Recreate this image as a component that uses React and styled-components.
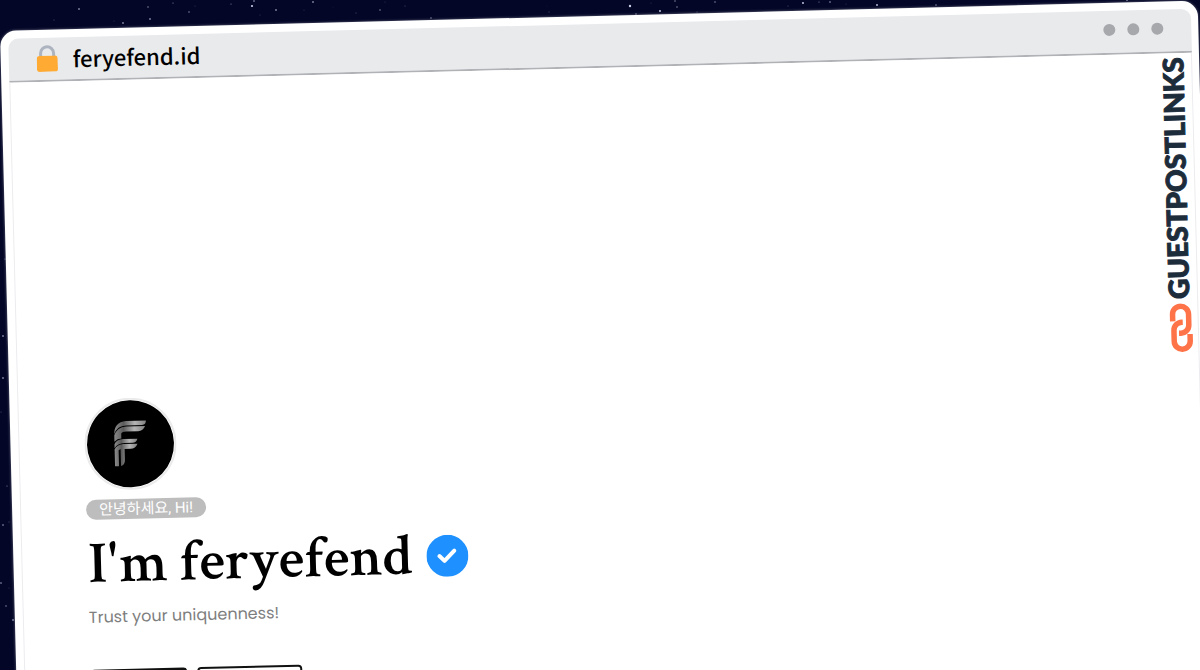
import React from 'react';
import styled, { createGlobalStyle } from 'styled-components';

const GlobalStyle = createGlobalStyle`
  * {
    box-sizing: border-box;
  }
  body {
    margin: 0;
    background: #030626;
  }
`;

const Sky = styled.div`
  position: relative;
  height: 100vh;
  overflow: hidden;
  padding: 31px 2px 0 0;
  background: #030626;
`;

const Stars = styled.svg`
  position: absolute;
  inset: 0;
  width: 100%;
  height: 100%;
`;

const Browser = styled.div`
  position: relative;
  min-height: 120vh;
  padding: 8px 7px 8px 8px;
  border-radius: 16px;
  background: #fff;
  box-shadow: 0 0 3px rgba(255, 255, 255, 0.4);
  transform: rotate(-1.45deg);
  transform-origin: 0 0;
`;

const AddressBar = styled.header`
  display: flex;
  align-items: center;
  height: 44px;
  padding: 0 28px 2px;
  border-bottom: 2px solid #b0b2b6;
  border-radius: 10px 10px 0 0;
  background: #e8eaec;
`;

const LockIcon = styled.svg`
  width: 21px;
  height: 27px;
  margin-right: 15px;
`;

const Address = styled.span`
  flex: 1;
  font-family: 'Noto Sans CJK JP', 'Noto Sans', sans-serif;
  font-size: 22px;
  font-weight: 500;
  line-height: 32px;
  color: #000;
`;

const Dots = styled.div`
  display: flex;
  gap: 12px;
  padding-bottom: 2px;
`;

const Dot = styled.span`
  width: 12px;
  height: 12px;
  border-radius: 50%;
  background: #a6a8ac;
`;

const Page = styled.div`
  display: flex;
  justify-content: space-between;
  align-items: flex-start;
  min-height: 110vh;
  border: solid #ececf0;
  border-width: 0 1px;
`;

const Profile = styled.main`
  display: flex;
  flex-direction: column;
  align-items: flex-start;
  padding: 318px 0 0 65px;
`;

const Avatar = styled.svg`
  width: 92px;
  height: 92px;
`;

const Greeting = styled.span`
  margin-top: 9px;
  padding: 0 13px;
  border-radius: 10px;
  background: #bdbdbd;
  color: #fff;
  font-family: Roboto, 'Noto Sans CJK KR', sans-serif;
  font-size: 15px;
  line-height: 20px;
`;

const Title = styled.div`
  display: flex;
  align-items: center;
  gap: 14px;
  margin: 14px 0 0 1px;
`;

const Name = styled.h1`
  margin: 0;
  font-family: 'Crimson Text', 'Liberation Serif', serif;
  font-size: 59px;
  font-weight: 600;
  line-height: 62px;
  color: #000;
`;

const Verified = styled.svg`
  width: 42px;
  height: 42px;
`;

const Tagline = styled.p`
  margin: 10px 0 0;
  font-family: Poppins, Inter, sans-serif;
  font-size: 16px;
  line-height: 24px;
  color: #7e7e7e;
`;

const Actions = styled.div`
  display: flex;
  gap: 10px;
  margin-top: 40px;
`;

const Button = styled.button`
  width: ${({ $filled }) => ($filled ? '97px' : '105px')};
  height: 44px;
  border: 2px solid #111;
  border-radius: 4px;
  background: ${({ $filled }) => ($filled ? '#111' : '#fff')};
`;

const Sponsor = styled.a`
  display: flex;
  flex-direction: column;
  align-items: center;
  gap: 4px;
  padding: 4px 2px 0 0;
  color: #1d2c3b;
  text-decoration: none;
`;

const SponsorName = styled.span`
  writing-mode: vertical-rl;
  rotate: 180deg;
  padding-left: 3px;
  font-family: Lato, sans-serif;
  font-size: 28px;
  font-weight: 900;
  line-height: 28px;
  -webkit-text-stroke: 1px #1d2c3b;
`;

const LinkIcon = styled.svg`
  width: 24px;
  height: 50px;
`;

const stars = [
  [79, 9, 1], [54, 20, 0.6], [114, 21, 0.5], [123, 23, 1], [148, 7, 0.8],
  [150, 19, 1], [189, 12, 0.8], [173, 3, 0.7], [195, 6, 0.5], [231, 4, 0.7],
  [252, 6, 1.4], [254, 1, 0.9], [260, 15, 0.5], [276, 10, 1], [304, 10, 0.5],
  [313, 2, 1], [333, 7, 0.4], [356, 13, 0.6], [380, 10, 0.8], [385, 2, 0.5],
  [405, 6, 0.6], [431, 18, 0.8], [547, 6, 0.4], [549, 12, 0.6], [630, 6, 1.5],
  [636, 14, 0.8], [651, 3, 0.5], [660, 11, 1.2], [675, 1, 0.8], [677, 7, 0.8],
  [697, 12, 0.6], [715, 2, 0.8], [788, 6, 0.6], [803, 3, 1.2], [819, 2, 0.7],
  [830, 2, 0.9], [846, 4, 0.5], [877, 5, 1.1], [936, 5, 0.8], [1127, 0, 1],
  [5, 259, 0.7], [3, 336, 1], [3, 378, 1], [1, 412, 0.6], [7, 486, 0.7],
  [9, 522, 0.6], [3, 525, 0.9], [1, 583, 0.9], [9, 588, 0.5], [6, 606, 0.8],
  [13, 620, 1],
];

const App = () => {
  return (
    <Sky>
      <GlobalStyle />
      <Stars aria-hidden="true">
        {stars.map(([x, y, r]) => (
          <circle key={`${x}-${y}`} cx={x} cy={y} r={r * 0.8} fill="#c9cde6" opacity={Math.min(1, r)} />
        ))}
      </Stars>
      <Browser>
        <AddressBar>
          <LockIcon viewBox="0 0 21 27" aria-hidden="true">
            <path d="M4 13V8.500a6.500 6.500 0 0 1 13 0v5" fill="none" stroke="#adb4bf" strokeWidth="3" />
            <rect x="0" y="11" width="21" height="16" rx="3" fill="#ffaa33" />
          </LockIcon>
          <Address>feryefend.id</Address>
          <Dots>
            <Dot />
            <Dot />
            <Dot />
          </Dots>
        </AddressBar>
        <Page>
          <Profile>
            <Avatar viewBox="0 0 92 92" role="img" aria-label="feryefend">
              <defs>
                <linearGradient id="metal" x1="0" y1="0" x2="1" y2="0">
                  <stop offset="0" stopColor="#8a8a8a" />
                  <stop offset="0.3" stopColor="#5c5c5c" />
                  <stop offset="0.65" stopColor="#b5b5b5" />
                  <stop offset="1" stopColor="#808080" />
                </linearGradient>
              </defs>
              <circle cx="46" cy="46" r="45" fill="#fff" stroke="#ebebeb" strokeWidth="2" />
              <circle cx="46" cy="46" r="43.500" fill="#000" />
              <g fill="url(#metal)">
                <path d="M30 36q0-12 12-13h20q0 4-4 4.500H42q-9 0-12 8.500z" />
                <path d="M30 41V37q3-8 12-8.500h19q-2 5-7 5H42q-4 0-5 2v5q-4 0-7 3z" />
                <path d="M30 46q2-5 9-5h14q-1 4-5 4h-8q-7 0-10 5z" />
                <path d="M30 51q3-5 9-5h14q-2 5-7 5h-6v11q0 5-4 6V51l-2 1v16h-4z" />
              </g>
            </Avatar>
            <Greeting>안녕하세요, Hi!</Greeting>
            <Title>
              <Name>I'm feryefend</Name>
              <Verified viewBox="0 0 42 42" role="img" aria-label="Verified">
                <circle cx="21" cy="21" r="21" fill="#1e90ff" />
                <path d="M13 21l5 5 10-10" fill="none" stroke="#fff" strokeWidth="4" strokeLinecap="round" strokeLinejoin="round" />
              </Verified>
            </Title>
            <Tagline>Trust your uniquenness!</Tagline>
            <Actions>
              <Button $filled aria-label="Contact" />
              <Button aria-label="Portfolio" />
            </Actions>
          </Profile>
          <Sponsor href="#guestpostlinks">
            <SponsorName>GUESTPOSTLINKS</SponsorName>
            <LinkIcon viewBox="0 0 24 50" aria-hidden="true">
              <g fill="none" stroke="#ff7348" strokeWidth="5.500">
                <path d="M4 18V11a8 8 0 0 1 8-8a8 8 0 0 1 8 8v11a8 8 0 0 1-8 8h-2" />
                <path d="M14 19h-1a8 8 0 0 0-8 8v11a8 8 0 0 0 8 8a8 8 0 0 0 8-8v-7" />
              </g>
            </LinkIcon>
          </Sponsor>
        </Page>
      </Browser>
    </Sky>
  );
};

export default App;
